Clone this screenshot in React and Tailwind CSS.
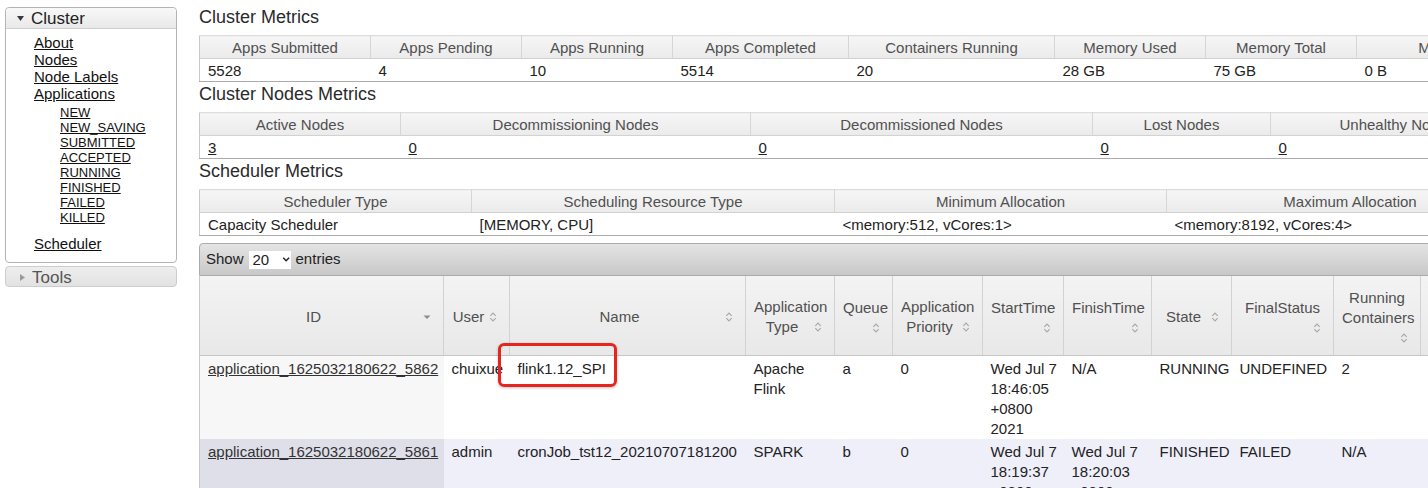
import React from 'react';

// ─── Data ─────────────────────────────────────────────────────────────────────
const CLUSTER_METRICS = [
  { label: 'Apps Submitted', value: '5528', w: 171 },
  { label: 'Apps Pending', value: '4', w: 151 },
  { label: 'Apps Running', value: '10', w: 151 },
  { label: 'Apps Completed', value: '5514', w: 176 },
  { label: 'Containers Running', value: '20', w: 206 },
  { label: 'Memory Used', value: '28 GB', w: 151 },
  { label: 'Memory Total', value: '75 GB', w: 151 },
  { label: 'Memory Reserved', value: '0 B', w: 246 },
];

const NODE_METRICS = [
  { label: 'Active Nodes', value: '3', w: 201, link: true },
  { label: 'Decommissioning Nodes', value: '0', w: 350, link: true },
  { label: 'Decommissioned Nodes', value: '0', w: 342, link: true },
  { label: 'Lost Nodes', value: '0', w: 178, link: true },
  { label: 'Unhealthy Nodes', value: '0', w: 253, link: true },
];

const SCHEDULER_METRICS = [
  { label: 'Scheduler Type', value: 'Capacity Scheduler', w: 272 },
  { label: 'Scheduling Resource Type', value: '[MEMORY, CPU]', w: 363 },
  { label: 'Minimum Allocation', value: '<memory:512, vCores:1>', w: 332 },
  { label: 'Maximum Allocation', value: '<memory:8192, vCores:4>', w: 367 },
];

const APP_COLUMNS = [
  { label: 'ID', w: 244, sorted: true },
  { label: 'User', w: 66 },
  { label: 'Name', w: 236 },
  { label: 'Application Type', w: 89 },
  { label: 'Queue', w: 58 },
  { label: 'Application Priority', w: 90 },
  { label: 'StartTime', w: 81 },
  { label: 'FinishTime', w: 88 },
  { label: 'State', w: 80 },
  { label: 'FinalStatus', w: 102 },
  { label: 'Running Containers', w: 87 },
  { label: 'Allocated CPU VCores', w: 150 },
];

const APPS = [
  {
    id: 'application_1625032180622_5862',
    cells: [
      'chuixue',
      'flink1.12_SPI',
      'Apache Flink',
      'a',
      '0',
      ['Wed Jul 7', '18:46:05', '+0800', '2021'],
      'N/A',
      'RUNNING',
      'UNDEFINED',
      '2',
      '2',
    ],
  },
  {
    id: 'application_1625032180622_5861',
    cells: [
      'admin',
      'cronJob_tst12_20210707181200',
      'SPARK',
      'b',
      '0',
      ['Wed Jul 7', '18:19:37', '+0800', '2021'],
      ['Wed Jul 7', '18:20:03', '+0800', '2021'],
      'FINISHED',
      'FAILED',
      'N/A',
      'N/A',
    ],
  },
];

const SUB_STATES = ['NEW', 'NEW_SAVING', 'SUBMITTED', 'ACCEPTED', 'RUNNING', 'FINISHED', 'FAILED', 'KILLED'];

const sumWidth = (cols) => cols.reduce((s, c) => s + c.w, 0);

// ─── Icons ────────────────────────────────────────────────────────────────────
function SortIcon() {
  return (
    <svg width="16" height="16" viewBox="0 0 16 16" className="float-right mt-[2px]">
      <path d="M5.3 6.8 8 4.1l2.7 2.7M5.3 9.2 8 11.9l2.7-2.7" fill="none" stroke="#a6a6a6" strokeWidth="1.1" />
    </svg>
  );
}

function SortedIcon() {
  return (
    <svg width="16" height="16" viewBox="0 0 16 16" className="float-right mt-[2px]">
      <path d="M4.5 6.5h7L8 10z" fill="#8c8c8c" />
    </svg>
  );
}

// ─── Sidebar ──────────────────────────────────────────────────────────────────
function Sidebar() {
  return (
    <aside className="ml-[5px] mt-[7px] w-[172px] shrink-0">
      <div className="rounded-[4px] border border-[#b4b4b4] bg-white">
        <div className="flex h-[21px] items-center rounded-t-[4px] border-b border-[#cfcfcf] bg-linear-to-b from-[#f8f8f8] to-[#e9e9e9] pl-[11px]">
          <svg width="7" height="5" viewBox="0 0 7 5">
            <path d="M0 0h7L3.5 5z" fill="#3a3a3a" />
          </svg>
          <span className="ml-[7px] text-[17px] leading-none text-[#222]">Cluster</span>
        </div>
        <div className="pl-[28px] pt-[5px] pb-[10px] text-[15px] leading-[17px] text-[#111]">
          <a className="block underline">About</a>
          <a className="block underline">Nodes</a>
          <a className="block underline">Node Labels</a>
          <a className="block underline">Applications</a>
          <ul className="mt-[3px] pl-[26px] text-[13px] leading-[15px]">
            {SUB_STATES.map((s) => (
              <li key={s}>
                <a className="underline">{s}</a>
              </li>
            ))}
          </ul>
          <a className="mt-[10px] block underline">Scheduler</a>
        </div>
      </div>
      <div className="mt-[3px] flex h-[21px] items-center rounded-[4px] border border-[#cdcdcd] bg-linear-to-b from-[#eeeeee] to-[#e2e2e2] pl-[14px] pt-[1px]">
        <svg width="5" height="7" viewBox="0 0 5 7">
          <path d="M0 0v7l5-3.5z" fill="#9a9a9a" />
        </svg>
        <span className="ml-[7px] text-[17px] leading-none text-[#555]">Tools</span>
      </div>
    </aside>
  );
}

// ─── Metrics table ────────────────────────────────────────────────────────────
function MetricsTable({ cols }) {
  return (
    <table className="table-fixed border-collapse text-[15px]" style={{ width: sumWidth(cols) }}>
      <colgroup>
        {cols.map((c) => (
          <col key={c.label} style={{ width: c.w }} />
        ))}
      </colgroup>
      <thead>
        <tr>
          {cols.map((c, i) => (
            <th
              key={c.label}
              className={`h-[23px] overflow-hidden whitespace-nowrap border-t border-b border-r border-t-[#dddddd] border-b-[#d2d2d2] border-r-[#d6d6d6] bg-linear-to-b from-[#f6f6f6] to-[#ebebeb] p-0 text-center font-normal leading-none text-[#505050] ${
                i === 0 ? 'border-l border-l-[#c8c8c8]' : ''
              }`}
            >
              {c.label}
            </th>
          ))}
        </tr>
      </thead>
      <tbody>
        <tr>
          {cols.map((c, i) => (
            <td
              key={c.label}
              className={`h-[23px] whitespace-nowrap border-b border-[#ababab] bg-white px-2 py-0 text-left leading-none text-[#222] ${
                i === 0 ? 'border-l border-l-[#c8c8c8]' : ''
              }`}
            >
              {c.link ? <a className="underline">{c.value}</a> : c.value}
            </td>
          ))}
        </tr>
      </tbody>
    </table>
  );
}

function SectionTitle({ children, first }) {
  return (
    <h2 className={`${first ? 'mt-[6px]' : 'mt-[1px]'} mb-[7px] text-[18px] leading-[22px] text-[#2a2a2a]`}>
      {children}
    </h2>
  );
}

// ─── Applications table ───────────────────────────────────────────────────────
function CellContent({ value }) {
  if (Array.isArray(value)) {
    return value.map((line) => (
      <div key={line} className="whitespace-nowrap">
        {line}
      </div>
    ));
  }
  return value;
}

function AppsTable() {
  return (
    <div className="relative mt-[7px]">
      {/* toolbar */}
      <div className="flex h-[33px] items-center rounded-tl-[4px] border border-[#ababab] bg-linear-to-b from-[#e4e4e4] to-[#c8c8c8] pl-[6px] text-[15px] text-[#222]">
        <span>Show</span>
        <div className="ml-[5px] flex h-[18px] w-[42px] items-center bg-white pl-[4px]">
          <span className="leading-none">20</span>
          <svg width="10" height="7" viewBox="0 0 10 7" className="ml-[13px]">
            <path d="M1.5 1.5 5 5l3.5-3.5" fill="none" stroke="#222" strokeWidth="1.8" />
          </svg>
        </div>
        <span className="ml-[5px]">entries</span>
      </div>

      <table className="table-fixed border-collapse text-[15px] leading-5" style={{ width: sumWidth(APP_COLUMNS) }}>
        <colgroup>
          {APP_COLUMNS.map((c) => (
            <col key={c.label} style={{ width: c.w }} />
          ))}
        </colgroup>
        <thead>
          <tr>
            {APP_COLUMNS.map((c, i) => (
              <th
                key={c.label}
                className={`h-[79px] border-r border-b border-r-[#d2d2d2] border-b-[#c6c6c6] bg-linear-to-b from-[#f3f3f3] to-[#e8e8e8] px-2 pt-[4px] pb-0 text-center align-middle font-normal text-[#505050] ${
                  i === 0 ? 'border-l border-l-[#c8c8c8]' : ''
                }`}
              >
                {c.label}
                {c.sorted ? <SortedIcon /> : <SortIcon />}
              </th>
            ))}
          </tr>
        </thead>
        <tbody>
          {APPS.map((row, ri) => {
            const odd = ri % 2 === 1;
            return (
              <tr key={row.id}>
                <td
                  className={`border-l border-l-[#c8c8c8] px-2 pt-[3px] pb-0 align-top whitespace-nowrap ${
                    odd ? 'bg-[#dfdfe9]' : 'bg-[#f7f7f7]'
                  }`}
                >
                  <a className="text-[#333] underline">{row.id}</a>
                </td>
                {row.cells.map((v, ci) => (
                  <td
                    key={ci}
                    className={`px-2 pt-[3px] pb-0 align-top text-[#222] ${ci === 1 ? 'whitespace-nowrap' : ''} ${
                      odd ? 'bg-[#efeffa]' : 'bg-white'
                    }`}
                  >
                    <CellContent value={v} />
                  </td>
                ))}
              </tr>
            );
          })}
        </tbody>
      </table>

      {/* highlight annotation */}
      <div className="pointer-events-none absolute left-[299px] top-[100px] h-[44px] w-[119px] rounded-[6px] border-[3px] border-[#e5251f] shadow-[0_1px_3px_rgba(0,0,0,0.25)]" />
    </div>
  );
}

// ─── Page ─────────────────────────────────────────────────────────────────────
export default function App() {
  return (
    <div className="flex h-[488px] w-[1428px] overflow-hidden bg-white font-['Liberation_Sans',Arial,Helvetica,sans-serif] text-[#222]">
      <Sidebar />
      <main className="ml-[22px] w-[1600px] shrink-0">
        <SectionTitle first>Cluster Metrics</SectionTitle>
        <MetricsTable cols={CLUSTER_METRICS} />
        <SectionTitle>Cluster Nodes Metrics</SectionTitle>
        <MetricsTable cols={NODE_METRICS} />
        <SectionTitle>Scheduler Metrics</SectionTitle>
        <MetricsTable cols={SCHEDULER_METRICS} />
        <AppsTable />
      </main>
    </div>
  );
}
